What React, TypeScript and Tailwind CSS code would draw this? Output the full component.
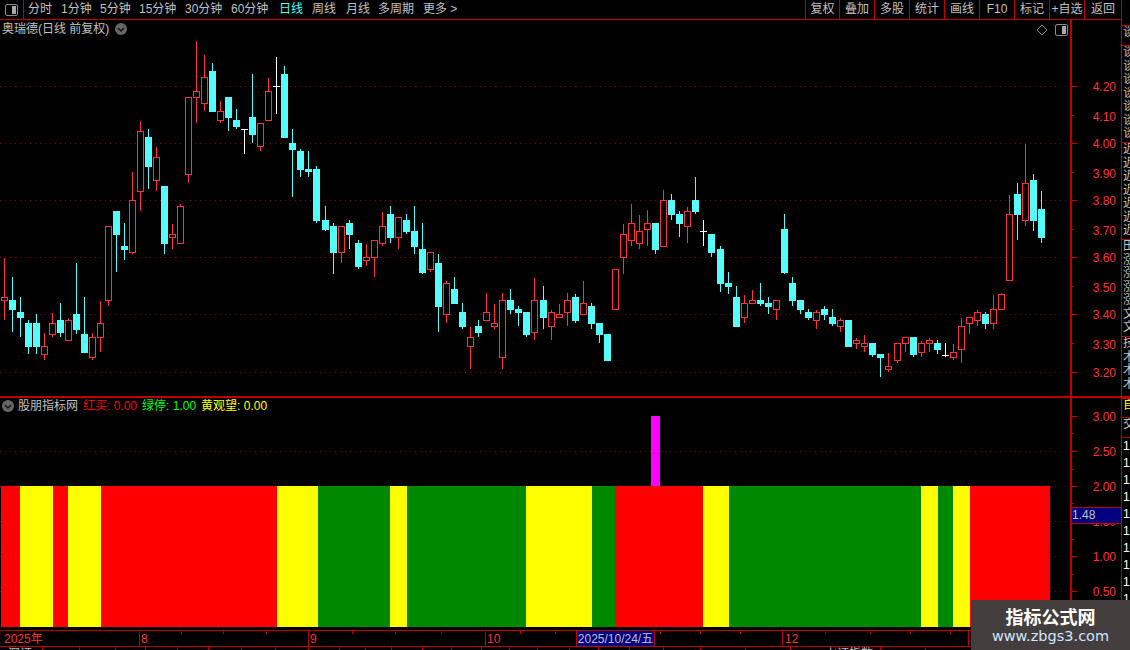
const FONT = '"Liberation Sans", "Noto Sans CJK SC", sans-serif';

const RED = "#ff3232";
const CYAN = "#54fcfc";

// x, high, body top, body bottom, low, kind
type Candle = [number, number, number, number, number, "r" | "c" | "w"];

const candles: Candle[] = [
  [4, 258, 297, 300, 320, "r"], [12, 277, 300, 309, 332, "c"], [20, 297, 312, 317, 337, "c"],
  [28, 320, 323, 346, 354, "c"], [36, 314, 323, 346, 354, "c"], [44, 333, 346, 354, 360, "r"],
  [52, 313, 323, 334, 337, "r"], [60, 303, 320, 332, 337, "c"], [68, 318, 320, 340, 340, "r"],
  [76, 263, 314, 329, 334, "c"], [84, 297, 334, 352, 352, "c"], [92, 333, 337, 357, 360, "r"],
  [100, 301, 323, 337, 352, "r"], [108, 226, 226, 300, 306, "r"], [116, 211, 211, 234, 272, "c"],
  [124, 223, 246, 249, 260, "c"], [132, 172, 200, 252, 254, "r"], [140, 121, 131, 191, 211, "r"],
  [148, 129, 137, 166, 189, "c"], [156, 147, 157, 180, 191, "r"], [164, 186, 186, 243, 254, "c"],
  [172, 224, 234, 237, 249, "r"], [180, 204, 206, 243, 243, "r"], [188, 97, 97, 174, 183, "r"],
  [196, 41, 91, 97, 123, "r"], [204, 55, 77, 103, 111, "r"], [212, 63, 71, 111, 111, "c"],
  [220, 101, 111, 120, 123, "r"], [228, 97, 97, 117, 131, "c"], [236, 109, 120, 126, 129, "c"],
  [244, 129, 129, 129, 154, "w"], [252, 74, 117, 134, 143, "c"], [260, 123, 123, 146, 151, "r"],
  [268, 78, 91, 120, 120, "r"], [276, 57, 86, 86, 114, "w"], [284, 66, 74, 137, 137, "c"],
  [292, 129, 143, 149, 197, "c"], [300, 149, 151, 169, 177, "c"], [308, 151, 169, 171, 177, "c"],
  [316, 166, 169, 220, 223, "c"], [325, 206, 220, 229, 231, "c"], [333, 223, 226, 252, 274, "c"],
  [341, 226, 226, 252, 263, "r"], [349, 220, 223, 234, 249, "c"], [358, 240, 243, 266, 269, "c"],
  [366, 244, 257, 260, 266, "r"], [374, 240, 240, 257, 277, "r"], [382, 212, 226, 243, 246, "r"],
  [390, 206, 214, 237, 243, "c"], [398, 217, 217, 237, 249, "r"], [406, 214, 220, 231, 234, "c"],
  [414, 206, 231, 246, 254, "c"], [422, 223, 249, 272, 274, "c"], [430, 252, 252, 269, 272, "r"],
  [438, 254, 263, 306, 332, "c"], [446, 281, 283, 314, 323, "r"], [454, 277, 289, 303, 303, "c"],
  [462, 303, 312, 326, 329, "c"], [470, 327, 337, 346, 369, "r"], [478, 320, 326, 332, 337, "c"],
  [486, 293, 312, 320, 320, "r"], [494, 304, 323, 326, 329, "r"], [502, 293, 300, 357, 369, "r"],
  [510, 289, 300, 309, 314, "c"], [518, 306, 309, 312, 326, "c"], [526, 312, 312, 334, 337, "c"],
  [534, 278, 300, 332, 340, "r"], [543, 286, 300, 317, 329, "c"], [551, 310, 312, 326, 340, "r"],
  [559, 304, 314, 317, 317, "r"], [567, 293, 300, 312, 326, "r"], [575, 294, 297, 320, 323, "c"],
  [583, 281, 303, 314, 314, "r"], [591, 303, 306, 323, 329, "c"], [599, 323, 323, 334, 343, "c"],
  [607, 334, 334, 360, 360, "c"], [615, 269, 269, 309, 309, "r"], [623, 224, 234, 257, 274, "r"],
  [631, 204, 223, 240, 246, "r"], [639, 215, 231, 243, 249, "r"], [647, 210, 223, 229, 246, "r"],
  [655, 223, 223, 249, 254, "c"], [663, 190, 200, 246, 246, "r"], [671, 194, 200, 214, 220, "c"],
  [679, 211, 214, 223, 237, "c"], [687, 207, 211, 226, 243, "r"], [695, 177, 200, 211, 214, "c"],
  [703, 220, 231, 231, 246, "w"], [711, 234, 234, 252, 257, "c"], [720, 246, 249, 283, 292, "c"],
  [728, 272, 283, 286, 294, "c"], [736, 286, 297, 326, 326, "c"], [744, 295, 303, 317, 323, "r"],
  [752, 290, 300, 303, 303, "r"], [760, 283, 300, 303, 306, "c"], [768, 297, 303, 306, 314, "c"],
  [776, 300, 300, 309, 320, "r"], [784, 214, 229, 272, 274, "c"], [792, 277, 283, 300, 306, "c"],
  [800, 300, 300, 309, 314, "c"], [808, 309, 312, 317, 320, "c"], [816, 310, 312, 320, 329, "r"],
  [824, 306, 309, 314, 320, "c"], [832, 309, 317, 323, 326, "c"], [840, 318, 320, 326, 332, "r"],
  [848, 320, 320, 346, 346, "c"], [856, 338, 340, 343, 349, "r"], [864, 335, 343, 346, 352, "r"],
  [872, 343, 343, 354, 357, "c"], [880, 354, 354, 357, 377, "c"], [888, 353, 366, 369, 372, "r"],
  [897, 343, 343, 360, 363, "r"], [905, 337, 337, 343, 352, "r"], [913, 337, 337, 354, 357, "c"],
  [921, 341, 343, 352, 357, "r"], [929, 338, 340, 343, 352, "r"], [937, 340, 343, 349, 354, "c"],
  [945, 343, 355, 355, 357, "w"], [953, 344, 352, 357, 360, "r"], [961, 318, 326, 349, 363, "r"],
  [969, 317, 317, 323, 334, "r"], [977, 310, 312, 320, 326, "r"], [985, 312, 314, 323, 329, "c"],
  [993, 295, 309, 323, 329, "r"], [1001, 293, 294, 309, 309, "r"], [1009, 195, 214, 280, 280, "r"],
  [1017, 183, 194, 214, 240, "c"], [1025, 144, 183, 220, 226, "r"], [1033, 174, 180, 220, 231, "c"],
  [1041, 191, 209, 237, 243, "c"],
];

const PRICE_TOP = 20;

const priceGrid = [86, 143, 200, 257, 314, 372];
const priceLabels: [string, number][] = [
  ["4.20", 86], ["4.10", 115], ["4.00", 143], ["3.90", 172], ["3.80", 200], ["3.70", 229],
  ["3.60", 257], ["3.50", 286], ["3.40", 314], ["3.30", 343], ["3.20", 372],
];

const bands: [number, number, string][] = [
  [1, 20, "#ff0000"], [20, 53, "#ffff00"], [53, 68, "#ff0000"], [68, 101, "#ffff00"],
  [101, 277, "#ff0000"], [277, 318, "#ffff00"], [318, 390, "#008800"], [390, 407, "#ffff00"],
  [407, 526, "#008800"], [526, 592, "#ffff00"], [592, 615, "#008800"], [615, 703, "#ff0000"],
  [703, 729, "#ffff00"], [729, 921, "#008800"], [921, 938, "#ffff00"], [938, 953, "#008800"],
  [953, 970, "#ffff00"], [970, 1050, "#ff0000"],
];

// label + distance to the next label in the toolbar
const tabs: [string, number][] = [
  ["分时", 33], ["1分钟", 39], ["5分钟", 39], ["15分钟", 46], ["30分钟", 46], ["60分钟", 48],
  ["日线", 33], ["周线", 34], ["月线", 32], ["多周期", 45], ["更多 >", 36],
];
const rightButtons = ["复权", "叠加", "多股", "统计", "画线", "F10", "标记", "+自选"];

const sideBlocks: [string, string, number][] = [
  ["a", "谈", 20],
  ["b", "谈谈谈谈谈谈谈", 97],
  ["c", "近近近近近近近", 97],
  ["d", "田涨涨涨涨文文", 97],
  ["e", "技术术术", 60],
];

function PanelIcon() {
  return (
    <span className="flex h-[12px] w-[13px] overflow-hidden rounded-[2px] border border-[#8a8a8a] p-[1px]">
      <span className="w-1/2" />
      <span className="w-1/2 bg-[#a8a8a8]" />
    </span>
  );
}

function ChevronBadge({ className }: { className: string }) {
  return (
    <svg width="12" height="12" viewBox="0 0 12 12" className={className}>
      <circle cx="6" cy="6" r="6" fill="#666666" />
      <path d="M3 5 L6 8 L9 5" fill="none" stroke="#101010" strokeWidth="1.4" />
    </svg>
  );
}

function CandleMark({ c }: { c: Candle }) {
  const [x, high, top, bottom, low, kind] = c;
  const y = (v: number) => v - PRICE_TOP;
  const cx = x + 0.5;
  if (kind === "w") {
    return (
      <g stroke="#ffffff">
        <line x1={cx} x2={cx} y1={y(high)} y2={y(low)} />
        <line x1={x - 3} x2={x + 4} y1={y(top) + 0.5} y2={y(top) + 0.5} />
      </g>
    );
  }
  if (kind === "c") {
    return (
      <g>
        <line x1={cx} x2={cx} y1={y(high)} y2={y(low)} stroke={CYAN} />
        <rect x={x - 3} y={y(top)} width="7" height={bottom - top + 1} fill={CYAN} />
      </g>
    );
  }
  return (
    <g stroke={RED}>
      <line x1={cx} x2={cx} y1={y(high)} y2={y(top)} />
      <line x1={cx} x2={cx} y1={y(bottom)} y2={y(low)} />
      <rect x={x - 3 + 0.5} y={y(top) + 0.5} width="6" height={bottom - top} fill="#000000" />
    </g>
  );
}

function PriceChart() {
  return (
    <svg width="1070" height="376" className="block">
      {priceGrid.map((g) => (
        <line key={g} x1="0" x2="1067" y1={g - PRICE_TOP + 0.5} y2={g - PRICE_TOP + 0.5} stroke="#8a0000" strokeDasharray="1 4" />
      ))}
      <g shapeRendering="crispEdges">
        {candles.map((c) => (
          <CandleMark key={c[0]} c={c} />
        ))}
      </g>
    </svg>
  );
}

function PriceAxis() {
  return (
    <svg width="49" height="376" className="block">
      {priceLabels.map(([label, y], i) => (
        <g key={label}>
          <line x1="0" x2={i % 2 === 0 ? 5 : 2} y1={y - PRICE_TOP + 0.5} y2={y - PRICE_TOP + 0.5} stroke="#c00000" />
          <text x="44" y={y - PRICE_TOP + 5 + (i % 2)} textAnchor="end" fill={RED} fontSize="12" fontFamily="Liberation Sans, sans-serif">
            {label}
          </text>
        </g>
      ))}
    </svg>
  );
}

function IndicatorChart() {
  const top = 398;
  return (
    <svg width="1070" height="232" className="block">
      {[451, 486, 521, 556, 591].map((g) => (
        <line key={g} x1="0" x2="1066" y1={g - top + 0.5} y2={g - top + 0.5} stroke="#8a0000" strokeDasharray="1 4" />
      ))}
      <g shapeRendering="crispEdges">
        <rect x="651" y={416 - top} width="9" height="70" fill="#ff00ff" />
        {bands.map(([a, b, fill]) => (
          <rect key={a} x={a} y={486 - top} width={b - a} height="141" fill={fill} />
        ))}
      </g>
    </svg>
  );
}

function IndicatorAxis() {
  const top = 398;
  const labels: [string, number][] = [["3.00", 416], ["2.50", 451], ["2.00", 486], ["1.50", 521], ["1.00", 556], ["0.50", 591]];
  const minor = [433, 469, 503, 539, 574, 609];
  return (
    <svg width="49" height="232" className="block">
      {minor.map((y) => (
        <line key={y} x1="0" x2="2" y1={y - top + 0.5} y2={y - top + 0.5} stroke="#c00000" />
      ))}
      {labels.map(([label, y]) => (
        <g key={label}>
          <line x1="0" x2="5" y1={y - top + 0.5} y2={y - top + 0.5} stroke="#c00000" />
          <text x="44" y={y - top + 5} textAnchor="end" fill={RED} fontSize="12" fontFamily="Liberation Sans, sans-serif">
            {label}
          </text>
        </g>
      ))}
    </svg>
  );
}

function TimeAxis() {
  const minor = [181, 223, 266, 352, 395, 441, 520, 555, 660, 700, 740, 825, 870, 910, 950];
  const major = [139, 308, 485, 782, 968];
  return (
    <div className="relative h-[15px] w-[1070px] overflow-hidden text-[12px] leading-[17px] text-[#ff3232]">
      <svg width="1070" height="15" shapeRendering="crispEdges" className="absolute left-0 top-0">
        {major.map((x) => (
          <line key={x} x1={x + 0.5} x2={x + 0.5} y1="0" y2="15" stroke="#c00000" />
        ))}
        {minor.map((x) => (
          <line key={x} x1={x + 0.5} x2={x + 0.5} y1="0" y2="3" stroke="#c00000" />
        ))}
      </svg>
      <span className="absolute left-[4px] top-0">2025年</span>
      <span className="absolute left-[141px] top-0">8</span>
      <span className="absolute left-[310px] top-0">9</span>
      <span className="absolute left-[487px] top-0">10</span>
      <span className="absolute left-[785px] top-0">12</span>
      <span className="absolute left-[576px] top-0 h-[15px] w-[79px] whitespace-nowrap border-x border-[#c00000] bg-[#000080] text-center text-[#c0c0c0]">
        2025/10/24/五
      </span>
    </div>
  );
}

function BottomStrip() {
  const ticks = [42, 79, 115, 145, 177, 208, 241, 275, 308, 339, 365, 391, 422, 451, 481, 509, 537, 569, 598, 629, 663, 700, 745, 790, 835, 880, 925];
  return (
    <div className="relative h-[3px] overflow-hidden">
      <svg width="1070" height="3" shapeRendering="crispEdges" className="absolute left-0 top-0">
        {ticks.map((x) => (
          <line key={x} x1={x + 0.5} x2={x + 0.5} y1="0" y2="3" stroke="#c00000" />
        ))}
      </svg>
      <span className="absolute left-[8px] top-0 text-[12px] leading-[14px]">深证</span>
      <span className="absolute left-[825px] top-0 text-[12px] leading-[14px]">上证指数</span>
    </div>
  );
}

function SideList() {
  return (
    <div className="w-[9px] shrink-0 overflow-hidden border-l border-[#c00000] text-[12px] leading-[13.5px]">
      <div className="h-[26px] border-b border-[#c00000]" />
      <div className="h-[371px] overflow-hidden">
        {sideBlocks.map(([id, text, h]) => (
          <div key={id} className="w-[14px] overflow-hidden border-b border-[#c00000] pl-[1px]" style={{ height: h }}>
            {text.split("").map((ch, i) => (
              <div key={i} className="h-[13.5px] w-[12px]">
                {ch}
              </div>
            ))}
          </div>
        ))}
      </div>
      <div className="h-[2px] bg-[#c00000]" />
      <div className="h-[19px] overflow-hidden border-b border-[#c00000] pl-[1px] text-[#ffff00]">自</div>
      <div className="h-[20px] overflow-hidden border-b border-[#c00000] pl-[1px]">交</div>
      <div className="pl-[1px] leading-[17px] text-white">
        {Array.from({ length: 11 }).map((_, i) => (
          <div key={i}>1</div>
        ))}
      </div>
    </div>
  );
}

export default function App() {
  return (
    <div className="relative flex h-[650px] w-[1130px] overflow-hidden bg-black text-[#c0c0c0]" style={{ fontFamily: FONT }}>
      <div className="w-[1121px] shrink-0">
        {/* top toolbar */}
        <div className="flex h-[20px] border-b border-[#c00000] text-[12px] leading-[19px]">
          <div className="flex w-[24px] items-center justify-center border-r border-[#c00000]">
            <PanelIcon />
          </div>
          <div className="flex pl-[4px]">
            {tabs.map(([t, w]) => (
              <span key={t} className={t === "日线" ? "whitespace-nowrap text-[#54fcfc]" : "whitespace-nowrap"} style={{ width: w }}>
                {t}
              </span>
            ))}
          </div>
          <div className="ml-auto flex">
            {rightButtons.map((b, i) => (
              <span key={b} className={i === 0 ? "w-[35px] border-x border-[#c00000] text-center whitespace-nowrap" : "w-[35px] border-r border-[#c00000] text-center whitespace-nowrap"}>
                {b}
              </span>
            ))}
            <span className="w-[36px] text-center">返回</span>
          </div>
        </div>

        <div className="flex">
          {/* charts column */}
          <div className="w-[1070px] shrink-0">
            <div className="relative h-[378px] border-b-2 border-[#c00000]">
              <PriceChart />
              <div className="absolute left-[2px] top-0 flex items-center gap-[6px] text-[12px] leading-[18px]">
                <span className="whitespace-nowrap">奥瑞德(日线 前复权)</span>
                <ChevronBadge className="" />
              </div>
              <svg width="12" height="12" viewBox="0 0 12 12" className="absolute left-[1036px] top-[4px]">
                <path d="M6 1 L11 6 L6 11 L1 6 Z" fill="none" stroke="#8a8a8a" />
              </svg>
              <span className="absolute left-[1055px] top-[4px]">
                <PanelIcon />
              </span>
            </div>
            <div className="relative h-[232px]">
              <IndicatorChart />
              <div className="absolute left-[2px] top-0 flex items-center text-[12px] leading-[16px]">
                <ChevronBadge className="mr-[4px]" />
                <span>股朋指标网</span>
                <span className="ml-[5px] text-[#ff0000]">红买: 0.00</span>
                <span className="ml-[5px] text-[#00ff00]">绿停: 1.00</span>
                <span className="ml-[5px] text-[#ffff00]">黄观望: 0.00</span>
              </div>
            </div>
            <div className="border-y border-[#c00000]">
              <TimeAxis />
            </div>
            <BottomStrip />
          </div>

          {/* y axis column */}
          <div className="h-[630px] w-[51px] shrink-0 border-l-2 border-[#c00000]">
            <div className="h-[378px] border-b-2 border-[#c00000]">
              <PriceAxis />
            </div>
            <div className="relative h-[232px]">
              <IndicatorAxis />
              <div className="absolute left-0 top-[109px] h-[17px] w-full border-y border-[#c00000] bg-[#000080] text-[12px] leading-[15px] text-[#c0c0c0]">
                1.48
              </div>
            </div>
          </div>
        </div>
      </div>

      <SideList />

      {/* watermark */}
      <div className="absolute bottom-0 right-0 flex h-[50px] w-[159px] flex-col items-center bg-[#433d3d] pt-[5px]">
        <span className="text-[18px] font-bold leading-[22px] text-white" style={{ fontFamily: '"Noto Sans CJK SC", sans-serif' }}>指标公式网</span>
        <span className="text-[14.5px] leading-[18px] text-[#cfe6ff]" style={{ fontFamily: '"DejaVu Sans", sans-serif' }}>
          www.zbgs3.com
        </span>
      </div>
    </div>
  );
}
